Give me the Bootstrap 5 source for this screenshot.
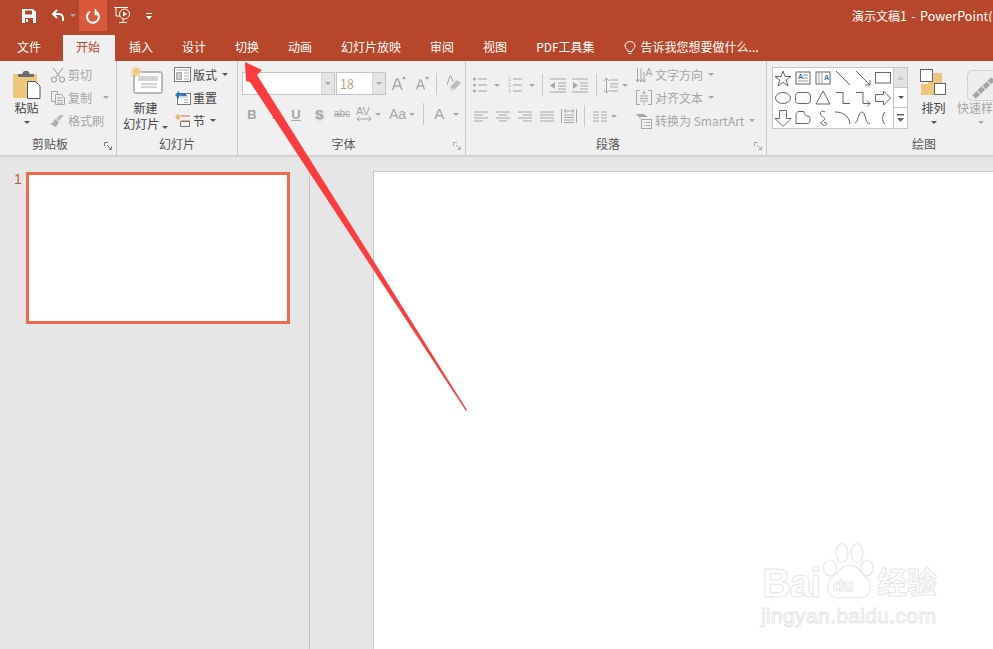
<!DOCTYPE html>
<html lang="zh-CN">
<head>
<meta charset="utf-8">
<title>演示文稿1 - PowerPoint</title>
<link href="https://cdn.jsdelivr.net/npm/bootstrap@5.3.0/dist/css/bootstrap.min.css" rel="stylesheet">
<style>
html,body{height:100%;overflow:hidden;margin:0}
body{font-family:"Noto Sans CJK SC","Liberation Sans",sans-serif;font-size:12px;line-height:1;background:#e6e6e6;color:#444}
svg{display:block;flex:none;overflow:visible}
.app{width:993px;height:649px;position:relative;overflow:hidden}
.top{background:#b7472a;height:61px;color:#fff}
.title-row{height:31px}
.qat{padding-left:22px;height:31px}
.qat-on{width:28px;height:31px;background:#d9593a;margin-left:3px}
.doc-title{width:141px;overflow:hidden;white-space:nowrap;font-size:12px;padding-top:1px}
.doc-title b{font-weight:400;font-size:12.500px;word-spacing:1.500px;letter-spacing:.05px}
.tabs{height:30px;flex-wrap:nowrap}
.tabs .nav-link{color:#fff;font-size:12px;height:26px;margin-top:4px;padding:6px 14.5px 0;white-space:nowrap}
.tabs .nav-link.first{padding-left:17px;padding-right:22px}
.tabs .nav-link.active{background:#f0f0f0;color:#b7472a;padding:6px 13px 0;width:51.500px}
.tabs .tell{padding-right:0;gap:5px;display:flex}
.ribbon{height:96px;background:#f0f0f0;border-bottom:2px solid #d2d2d2}
.grp{position:relative;height:94px;border-right:1px solid #c9c9c9;flex:none;box-sizing:content-box}
.g1{width:116px}.g2{width:120px}.g3{width:227px}.g4{width:300px}.g5{width:226px;border-right:0}
.grp-body{height:75px}
.grp-label{height:19px;text-align:center;color:#555;font-size:12px;padding-top:2px;position:relative}
.g1 .grp-label,.g3 .grp-label,.g4 .grp-label{padding-right:16px}
.g5 .grp-label{padding-left:88px}
.launch{position:absolute;right:4px;top:6px}
.dim{color:#a6a6a6}
.dark{color:#444}
.car{display:inline-block;flex:none;width:0;height:0;border-left:3px solid transparent;border-right:3px solid transparent;border-top:3px solid #a8a8a8}
.car.d{border-top-color:#555}
.big{width:29px;margin-left:12px;padding-top:9px}
.col3{margin-left:9px;padding-top:2px}
.col3b{margin-left:6px}
.r{height:23px;gap:2px}
.w16{width:16px}
.big2{width:45px;margin-left:6px;padding-top:5px}
.big2 .lbl{margin-top:6px;line-height:16px;white-space:nowrap}
.mt3{margin-top:3px}.mt7{margin-top:7px}
.box{height:23px;border:1px solid #c6c6c6;background:#fff}
.box1{width:93px;margin-left:4px}
.box2{width:50px;margin-left:1px}
.box .drop{margin-left:auto;width:13px;height:21px;background:#e4e4e4;border-left:1px solid #d8d8d8}
.box .val{padding-left:3px;color:#bfa283;font-size:12.500px;line-height:21px}
.fr1{padding-top:11px}
.fr2{margin-top:8px;height:22px}
.k{width:22px;text-align:center;font-weight:700;font-size:13px;color:#a6a6a6;font-family:"Liberation Sans",sans-serif}
.k.s{text-shadow:1px 1px 2px #bbb}
.abc{font-size:10px;font-weight:400;text-decoration:line-through}
.sep{width:1px;height:22px;background:#c9c9c9;flex:none}
.ml1{margin-left:1px}.ml2{margin-left:2px}.ml3{margin-left:3px}.ml4{margin-left:4px}.ml5{margin-left:5px}.ml6{margin-left:6px}.ml7{margin-left:7px}.ml8{margin-left:8px}.ml9{margin-left:9px}.ml10{margin-left:10px}.ml11{margin-left:11px}.ml15{margin-left:15px}
.fsz{font-size:15px;font-weight:400;color:#a6a6a6;line-height:16px;font-family:"Liberation Sans",sans-serif}
.fsz.aa{font-size:14px}
.lt{width:170px}
.pr1{padding:13px 0 0 7px;height:35px}
.pr2{margin-top:9px;height:22px}
.rt .r{gap:3px}
.rt{padding-top:2px}
.gal{flex:none;margin:6px 0 0 5px;border:1px solid #c6c6c6;background:#fff;width:122px;height:62px;display:grid;grid-template-columns:repeat(6,20px);grid-auto-rows:20px;justify-content:center}
.gal svg{width:20px;height:20px}
.scr{flex:none;margin-top:6px;width:14px;height:62px;border:1px solid #c6c6c6;border-left:0}
.scr div{height:20px;border-bottom:1px solid #c6c6c6;background:#fff}
.scr div:first-child{background:#e3e3e3}
.scr div:last-child{border-bottom:0}
.arr{flex:none;margin-left:11px;width:29px;padding-top:8px}
.arr .lbl{margin-top:6px;white-space:nowrap}
.qs{margin-left:9px;width:48px;flex:none;padding-top:9px}
.qs svg{align-self:flex-start;margin-left:10px}
.qs .lbl{margin-top:1px;white-space:nowrap}
.main{height:492px}
.pane{width:310px;border-right:1px solid #c2c2c2;padding:15px 0 0 14px;flex:none}
.num{color:#c8583a;font-size:14px;width:12px;line-height:14px;font-family:"Liberation Sans",sans-serif}
.thumb{width:264px;height:152px;border:3px solid #f0694a;background:#fff}
.stage{padding:14px 0 0 63px;flex:1 1 0;min-width:0}
.slide{background:#fff;border:1px solid #c8c8c8;border-right:0;border-bottom:0;height:100%}
.wm{position:absolute;left:760px;top:541px;width:180px;height:90px;color:#fff;font-family:"Liberation Sans",sans-serif;pointer-events:none}
.wm span{position:absolute;-webkit-text-stroke:1px #e6e6e6;white-space:nowrap;line-height:1}
.wm .m-bai{left:2px;top:26px;font-size:40px;line-height:.8;font-weight:700;letter-spacing:-1.500px}
.wm .m-du{left:73px;top:36px;font-size:17px;font-weight:700;letter-spacing:-.3px}
.wm .m-jing{left:117px;top:24px;font-size:30px;font-weight:700;font-family:"Noto Sans CJK SC",sans-serif}
.wm .m-url{left:1px;top:64px;font-size:21px;letter-spacing:.35px}
.paw{position:absolute;left:62px;top:0}
.arrow{position:absolute;left:0;top:0;pointer-events:none}
</style>
</head>
<body>
<div class="app">
  <header class="top">
    <div class="title-row d-flex justify-content-between align-items-center">
      <div class="qat d-flex align-items-center">
        <svg width="14" height="14" viewBox="0 0 14 14"><path d="M0 0h11l3 3v11H0z" fill="#fff"/><path d="M3 1.500h7v4H3zM3 9h8v5H3z" fill="#b7472a"/><path d="M4 10h2v3H4z" fill="#fff"/></svg>
        <svg class="ml15" width="14" height="13" viewBox="0 0 14 13" fill="none" stroke="#fff" stroke-width="2"><path d="M6 1 2 5l4 4"/><path d="M2 5h6a4.500 4.500 0 0 1 4 4.500V12"/></svg>
        <span class="car ml5"></span>
        <div class="qat-on d-flex align-items-center justify-content-center">
          <svg width="14" height="15" viewBox="0 0 14 15" fill="none" stroke="#fff" stroke-width="2"><path d="M4 3.500a6 6 0 1 0 5-.4"/><path d="M9.500 1v6M9 6.500h4" stroke-width="1.600"/></svg>
        </div>
        <svg class="ml7" width="18" height="17" viewBox="0 0 18 17" fill="none" stroke="#fff" stroke-width="1"><path d="M0 .5h14M2 1v8h4M9 11v4M5 15.500h8"/><circle cx="10.500" cy="7" r="5"/><path d="M9 4.500v5l4-2.500z" fill="#fff" stroke="none"/></svg>
        <svg class="ml11" width="12" height="8" viewBox="0 0 12 8"><path d="M3 1h6v1H3zM3 4h6L6 7.500z" fill="#fff"/></svg>
      </div>
      <div class="doc-title">演示文稿<b>1 - PowerPoint(</b>产品激活失败)</div>
    </div>
    <ul class="nav tabs">
      <li class="nav-item"><a class="nav-link first" href="#">文件</a></li>
      <li class="nav-item"><a class="nav-link active" href="#">开始</a></li>
      <li class="nav-item"><a class="nav-link" href="#">插入</a></li>
      <li class="nav-item"><a class="nav-link" href="#">设计</a></li>
      <li class="nav-item"><a class="nav-link" href="#">切换</a></li>
      <li class="nav-item"><a class="nav-link" href="#">动画</a></li>
      <li class="nav-item"><a class="nav-link" href="#">幻灯片放映</a></li>
      <li class="nav-item"><a class="nav-link" href="#">审阅</a></li>
      <li class="nav-item"><a class="nav-link" href="#">视图</a></li>
      <li class="nav-item"><a class="nav-link" href="#">PDF工具集</a></li>
      <li class="nav-item"><a class="nav-link tell" href="#"><svg width="12" height="14" viewBox="0 0 12 14" fill="none" stroke="#fff"><path d="M4 10.500C4 8.500 1 7.500 1 5a5 4.500 0 0 1 10 0c0 2.500-3 3.500-3 5.500zM4.500 12.500h3"/></svg>告诉我您想要做什么...</a></li>
    </ul>
  </header>

  <section class="ribbon d-flex">
    <!-- clipboard -->
    <div class="grp g1">
      <div class="grp-body d-flex">
        <div class="big d-flex flex-column align-items-center">
          <svg width="29" height="29" viewBox="0 0 29 29"><rect x="1" y="4" width="24" height="24" fill="#edc67e"/><path d="M6 4h4l2-3h4l2 3h4v3H6z" fill="#6b6b6b"/><path d="M15.500 11.500h8l4.500 4.500v12.500H15.500z" fill="#fff" stroke="#555"/></svg>
          <div class="mt3 dark text-nowrap">粘贴</div>
          <span class="car d mt7"></span>
        </div>
        <div class="col3">
          <div class="r d-flex align-items-center dim"><svg class="w16" width="16" height="16" viewBox="0 0 16 16" fill="none" stroke="#a8a8a8" stroke-width="1.200"><path d="M3 1l7 9M13 1 6 10"/><circle cx="4" cy="12.500" r="2.500"/><circle cx="12" cy="12.500" r="2.500"/></svg><span>剪切</span></div>
          <div class="r d-flex align-items-center dim"><svg class="w16" width="16" height="16" viewBox="0 0 16 16" fill="none" stroke="#a8a8a8"><path d="M1.500 1.500h6v3M1.500 1.500v10h4"/><path d="M5.500 4.500h6l3 3v7h-9zM7 8h6M7 10.500h6M7 13h6"/></svg><span>复制</span><span class="car ml9"></span></div>
          <div class="r d-flex align-items-center dim"><svg class="w16" width="16" height="16" viewBox="0 0 16 16"><path d="M10 2l4 0-5 6-3-2z" fill="#bdbdbd"/><path d="M5 6l4 3-3 5-6-3c2 0 3-2 5-5z" fill="#b0b0b0"/></svg><span>格式刷</span></div>
        </div>
      </div>
      <div class="grp-label">剪贴板
        <svg class="launch" width="8" height="8" viewBox="0 0 8 8" fill="none" stroke="#777"><path d="M.5 4V.5H4M3 3l4 4M7.500 4.500v3h-3"/></svg>
      </div>
    </div>
    <!-- slides -->
    <div class="grp g2">
      <div class="grp-body d-flex">
        <div class="big2 d-flex flex-column align-items-center">
          <svg width="34" height="28" viewBox="0 0 34 28"><rect x="5" y="6" width="28" height="21" rx="1.500" fill="#fff" stroke="#777"/><rect x="9" y="10" width="20" height="5" fill="#d4d4d4"/><path d="M12 18h16M12 21h16" stroke="#aaa"/><circle cx="7" cy="6" r="3.500" fill="#f0c97c"/><path d="M7 0v12M1 6h12M3 2l8 8M11 2l-8 8" stroke="#f0c97c" stroke-width="1.200"/></svg>
          <div class="lbl dark text-center">新建<br>幻灯片 <span class="car d"></span></div>
        </div>
        <div class="col3 col3b">
          <div class="r d-flex align-items-center dark"><svg width="17" height="15" viewBox="0 0 17 15"><rect x=".5" y=".5" width="16" height="14" fill="#fff" stroke="#777"/><path d="M2.500 3h12M2.500 5.500h5v7h-5zM10 6h5M10 9h5M10 12h5" fill="#ccc" stroke="#aaa"/></svg><span>版式</span><span class="car d ml3"></span></div>
          <div class="r d-flex align-items-center dark"><svg width="17" height="15" viewBox="0 0 17 15"><rect x="3.500" y="3.500" width="13" height="11" fill="#fff" stroke="#777"/><path d="M6 7h8M10 10h4M10 12.500h4" stroke="#aaa"/><path d="M1 5 5 1v2h4a4 4 0 0 1 4 3H8c-1-.5-2-.5-3 0v3z" fill="#2f75b5"/></svg><span>重置</span></div>
          <div class="r d-flex align-items-center dark"><svg width="17" height="15" viewBox="0 0 17 15"><path d="M4 1v6M1 4h6M2 2l4 4M6 2 2 6" stroke="#eda95a"/><path d="M7 3h9M7 8h9" stroke="#d9733a" fill="none"/><path d="M6.500 8.500v5h9v-5z" fill="none" stroke="#777"/></svg><span>节</span><span class="car d ml3"></span></div>
        </div>
      </div>
      <div class="grp-label">幻灯片</div>
    </div>
    <!-- font -->
    <div class="grp g3">
      <div class="grp-body">
        <div class="fr1 d-flex align-items-center">
          <div class="box box1 d-flex"><div class="drop d-flex align-items-center justify-content-center"><span class="car"></span></div></div>
          <div class="box box2 d-flex"><span class="val">18</span><div class="drop d-flex align-items-center justify-content-center"><span class="car"></span></div></div>
          <svg class="ml6" width="14" height="15" viewBox="0 0 14 15"><path d="M.5 14 4.500 3h1.500l4 11M2.500 10h5.500" fill="none" stroke="#a6a6a6" stroke-width="1.500"/><path d="M10 3l2-3 2 3z" fill="#a6a6a6"/></svg>
          <svg class="ml10" width="13" height="13" viewBox="0 0 13 13"><path d="M.5 12.500 4 3h1l3.500 9.500M2 9h5" fill="none" stroke="#a6a6a6" stroke-width="1.300"/><path d="M9 0h4l-2 3z" fill="#a6a6a6"/></svg>
          <div class="sep ml7"></div>
          <svg class="ml9" width="15" height="17" viewBox="0 0 15 17"><path d="M1 10 4 1h1l2 6" fill="none" stroke="#a6a6a6"/><path d="M4 12l7-7 4 3-7 7z" fill="#bdbdbd"/><path d="M4 12l4 3-1.500 1.500-3.500-2z" fill="#ddd"/></svg>
        </div>
        <div class="fr2 d-flex align-items-center">
          <div class="k ml3">B</div><div class="k"><i>I</i></div><div class="k text-decoration-underline">U</div><div class="k s ml1">S</div>
          <div class="k abc ml1">abc</div>
          <svg class="ml3" width="16" height="18" viewBox="0 0 16 18"><text x="0" y="10" font-size="11" fill="#a6a6a6" font-family="Liberation Sans">AV</text><path d="M1 14h14M3.500 11.500 1 14l2.500 2.500M12.500 11.500 15 14l-2.500 2.500" fill="none" stroke="#a6a6a6"/></svg>
          <span class="car ml3"></span>
          <div class="fsz aa ml8">Aa</div>
          <span class="car ml3"></span>
          <div class="sep ml8"></div>
          <div class="fsz ml10">A</div>
          <span class="car ml9"></span>
        </div>
      </div>
      <div class="grp-label">字体
        <svg class="launch" width="8" height="8" viewBox="0 0 8 8" fill="none" stroke="#aaa"><path d="M.5 4V.5H4M3 3l4 4M7.500 4.500v3h-3"/></svg>
      </div>
    </div>
    <!-- paragraph -->
    <div class="grp g4">
      <div class="grp-body d-flex">
        <div class="lt">
          <div class="pr1 d-flex align-items-center">
            <svg width="14" height="18" viewBox="0 0 14 18"><path d="M5 3h9M5 9h9M5 15h9" stroke="#a6a6a6"/><circle cx="1.500" cy="3" r="1.500" fill="#a6a6a6"/><circle cx="1.500" cy="9" r="1.500" fill="#a6a6a6"/><circle cx="1.500" cy="15" r="1.500" fill="#a6a6a6"/></svg>
            <span class="car ml7"></span>
            <svg class="ml8" width="14" height="18" viewBox="0 0 14 18"><path d="M5 3h9M5 9h9M5 15h9" stroke="#a6a6a6"/><text x="0" y="5" font-size="5" fill="#a6a6a6">1</text><text x="0" y="11" font-size="5" fill="#a6a6a6">2</text><text x="0" y="17" font-size="5" fill="#a6a6a6">3</text></svg>
            <span class="car ml7"></span>
            <div class="sep ml7"></div>
            <svg class="ml7" width="16" height="15" viewBox="0 0 16 15"><path d="M0 1h16M8 5h8M8 8h8M8 11h8M0 14h16" stroke="#a6a6a6"/><path d="M0 7.500 5 4v7z" fill="#a6a6a6"/></svg>
            <svg class="ml6" width="16" height="15" viewBox="0 0 16 15"><path d="M0 1h16M8 5h8M8 8h8M8 11h8M0 14h16" stroke="#a6a6a6"/><path d="M6 7.500 1 4v7z" fill="#a6a6a6"/></svg>
            <div class="sep ml8"></div>
            <svg class="ml7" width="14" height="17" viewBox="0 0 14 17"><path d="M6 3h8M6 7h8M6 10h8M6 14h8" stroke="#a6a6a6"/><path d="M2.500 1v15M0 4l2.500-3L5 4M0 13l2.500 3L5 13" fill="none" stroke="#a6a6a6"/></svg>
            <span class="car ml4"></span>
          </div>
          <div class="pr2 d-flex align-items-center">
            <svg class="ml8" width="14" height="11" viewBox="0 0 14 11"><path d="M0 1h14M0 4h9M0 7h14M0 10h9" stroke="#a6a6a6"/></svg>
            <svg class="ml8" width="14" height="11" viewBox="0 0 14 11"><path d="M0 1h14M3 4h8M0 7h14M3 10h8" stroke="#a6a6a6"/></svg>
            <svg class="ml8" width="14" height="11" viewBox="0 0 14 11"><path d="M0 1h14M5 4h9M0 7h14M5 10h9" stroke="#a6a6a6"/></svg>
            <svg class="ml8" width="14" height="11" viewBox="0 0 14 11"><path d="M0 1h14M0 4h14M0 7h14M0 10h14" stroke="#a6a6a6"/></svg>
            <svg class="ml7" width="16" height="16" viewBox="0 0 16 16"><path d="M.5 1v14M15.500 1v14M3 7h10M3 9.500h10M3 12h10M3 14.500h10" stroke="#a6a6a6"/><path d="M3 3h10M5 1 3 3l2 2M11 1l2 2-2 2" fill="none" stroke="#a6a6a6"/></svg>
            <div class="sep ml7"></div>
            <svg class="ml8" width="14" height="11" viewBox="0 0 14 11"><path d="M0 1h6M8 1h6M0 4h6M8 4h6M0 7h6M8 7h6M0 10h6M8 10h6" stroke="#a6a6a6"/></svg>
            <span class="car ml4"></span>
          </div>
        </div>
        <div class="rt dim">
          <div class="r d-flex align-items-center"><svg class="w16" width="16" height="16" viewBox="0 0 16 16"><path d="M1.500 1v14M5 1v14M8 5v10M0 12.500l1.500 2.500L3 12.500M3.500 12.500 5 15l1.500-2.500M6.500 12.500 8 15l1.500-2.500" fill="none" stroke="#a6a6a6"/><text x="9.500" y="9" font-size="10" fill="#a6a6a6" font-family="Liberation Sans">A</text></svg><span>文字方向</span><span class="car ml2"></span></div>
          <div class="r d-flex align-items-center"><svg class="w16" width="16" height="16" viewBox="0 0 16 16" fill="none" stroke="#a6a6a6"><path d="M4 .5H.5v14H4M12 .5h3.500v14H12"/><path d="M4 6h8M4 8.500h8M4 11h8M8 .5v3M6.500 2 8 4 9.500 2M8 12.500v3"/></svg><span>对齐文本</span><span class="car ml2"></span></div>
          <div class="r d-flex align-items-center"><svg class="w16" width="16" height="16" viewBox="0 0 16 16"><path d="M0 1h8l4 3H4l2 3z" fill="#a6a6a6"/><rect x="5.500" y="6.500" width="10" height="9" fill="#f0f0f0" stroke="#a6a6a6"/><path d="M8 9.500h1M8 12.500h1M10 9.500h4M10 12.500h4" stroke="#a6a6a6"/></svg><span>转换为 SmartArt</span><span class="car ml2"></span></div>
        </div>
      </div>
      <div class="grp-label">段落
        <svg class="launch" width="8" height="8" viewBox="0 0 8 8" fill="none" stroke="#aaa"><path d="M.5 4V.5H4M3 3l4 4M7.500 4.500v3h-3"/></svg>
      </div>
    </div>
    <!-- drawing -->
    <div class="grp g5">
      <div class="grp-body d-flex">
        <div class="gal">
          <svg viewBox="0 0 20 20" fill="none" stroke="#666"><path d="M10 3l2 5.500h6l-4.800 3.500 1.800 6-5-3.700-5 3.700 1.800-6L2 8.500h6z"/></svg>
          <svg viewBox="0 0 20 20" fill="none" stroke="#666"><rect x="3" y="4" width="14" height="12"/><text x="5" y="11" font-size="7" font-weight="700" fill="#2f75b5" stroke="none" font-family="Liberation Sans">A</text><path d="M10 7h5M10 10h5M5 13h10" stroke="#999"/></svg>
          <svg viewBox="0 0 20 20" fill="none" stroke="#666"><rect x="3" y="4" width="14" height="12"/><path d="M6 5v10M9 5v10" stroke="#999"/><text x="11" y="12" font-size="7" font-weight="700" fill="#2f75b5" stroke="none" font-family="Liberation Sans">A</text></svg>
          <svg viewBox="0 0 20 20" stroke="#666"><path d="M3 3l14 14"/></svg>
          <svg viewBox="0 0 20 20" fill="none" stroke="#666"><path d="M3 3l14 14M17 12v5h-5"/></svg>
          <svg viewBox="0 0 20 20" fill="none" stroke="#666"><rect x="2.500" y="4.500" width="15" height="10.500"/></svg>

          <svg viewBox="0 0 20 20" fill="none" stroke="#666"><ellipse cx="10" cy="10" rx="7.500" ry="5.500"/></svg>
          <svg viewBox="0 0 20 20" fill="none" stroke="#666"><rect x="2.500" y="4.500" width="15" height="11" rx="3"/></svg>
          <svg viewBox="0 0 20 20" fill="none" stroke="#666"><path d="M10 3l7 13H3z"/></svg>
          <svg viewBox="0 0 20 20" fill="none" stroke="#666"><path d="M3 4.500h7v11h7"/></svg>
          <svg viewBox="0 0 20 20" fill="none" stroke="#666"><path d="M3 4.500h7v11h7M14 12.500l3 3-3 3"/></svg>
          <svg viewBox="0 0 20 20" fill="none" stroke="#666"><path d="M2.500 6.500h8V3l7 7-7 7v-3.500h-8z"/></svg>

          <svg viewBox="0 0 20 20" fill="none" stroke="#666"><path d="M6.500 2.500h7v8H18l-8 8-8-8h4.500z"/></svg>
          <svg viewBox="0 0 20 20" fill="none" stroke="#666"><path d="M3 7c0-2 1-3.500 3-3.500h5c0 3 2 5 5 5 1 0 1 2 1 3 0 3-1 4-3 4H3z"/></svg>
          <svg viewBox="0 0 20 20" fill="none" stroke="#666"><path d="M12 4c-3-2-6 0-4 3s5 2 3 5-4 1-3 3 3 3 5 2 0-4-2-2"/></svg>
          <svg viewBox="0 0 20 20" fill="none" stroke="#666"><path d="M2 4c7 0 14 3 15 12"/></svg>
          <svg viewBox="0 0 20 20" fill="none" stroke="#666"><path d="M2 15c3 0 3-11 7-11s3 12 8 12"/></svg>
          <svg viewBox="0 0 20 20" fill="none" stroke="#555"><path d="M12 4.500c-3 0-1 4.500-3 5.500 2 1 0 5.500 3 5.500"/></svg>
        </div>
        <div class="scr">
          <div class="d-flex align-items-center justify-content-center"><svg width="7" height="4" viewBox="0 0 7 4"><path d="M0 4l3.500-4L7 4z" fill="#c4c4c4"/></svg></div>
          <div class="d-flex align-items-center justify-content-center"><span class="car d"></span></div>
          <div class="d-flex flex-column align-items-center justify-content-center"><svg width="7" height="8" viewBox="0 0 7 8"><path d="M0 0h7v1.500H0zM0 4h7L3.500 8z" fill="#666"/></svg></div>
        </div>
        <div class="arr d-flex flex-column align-items-center">
          <svg width="27" height="27" viewBox="0 0 27 27"><rect x="8" y="4" width="14" height="15" fill="#edc67e"/><rect x="1" y="15" width="15" height="11" fill="#edc67e"/><rect x=".5" y=".5" width="12" height="12" fill="#fff" stroke="#666"/><rect x="14.500" y="14.500" width="11" height="11" fill="#fff" stroke="#666"/></svg>
          <div class="lbl dark">排列</div>
          <span class="car d mt7"></span>
        </div>
        <div class="qs d-flex flex-column align-items-center">
          <svg width="34" height="31" viewBox="0 0 34 31"><rect x=".5" y=".5" width="33" height="30" rx="5" fill="#f0edf1" stroke="#d0d0d0"/><path d="M7 27 26 9" stroke="#a6a6a6" stroke-width="5" stroke-dasharray="6 1"/></svg>
          <div class="lbl dim">快速样式</div>
          <span class="car mt7"></span>
        </div>
      </div>
      <div class="grp-label">绘图</div>
    </div>
  </section>

  <main class="main d-flex">
    <aside class="pane d-flex">
      <div class="num">1</div>
      <div class="thumb"></div>
    </aside>
    <div class="stage"><div class="slide"></div></div>
  </main>

  <div class="wm">
    <svg class="paw" width="56" height="60" viewBox="0 0 56 60" fill="#fff" stroke="#e6e6e6" stroke-width="1.200"><ellipse cx="8" cy="27" rx="6.500" ry="8"/><ellipse cx="20" cy="12" rx="6" ry="9.500"/><ellipse cx="35" cy="12" rx="6" ry="9.500"/><ellipse cx="45" cy="27" rx="6" ry="8"/><path d="M28 24c8 0 9 7 15 11 8 6 8 22-6 22-4 0-6-1-10-1s-6 1-10 1C3 57 3 41 11 35c6-4 8-11 17-11z"/></svg>
    <span class="m-bai">Bai</span>
    <span class="m-du">du</span>
    <span class="m-jing">经验</span>
    <span class="m-url">jingyan.baidu.com</span>
  </div>

  <svg class="arrow" width="993" height="649" viewBox="0 0 993 649"><polygon points="245,62 262,70 257,75 467,410 466,411 250,82 246,81" fill="#ff3b3b"/></svg>
</div>
<script src="https://cdn.jsdelivr.net/npm/bootstrap@5.3.0/dist/js/bootstrap.bundle.min.js"></script>
</body>
</html>
